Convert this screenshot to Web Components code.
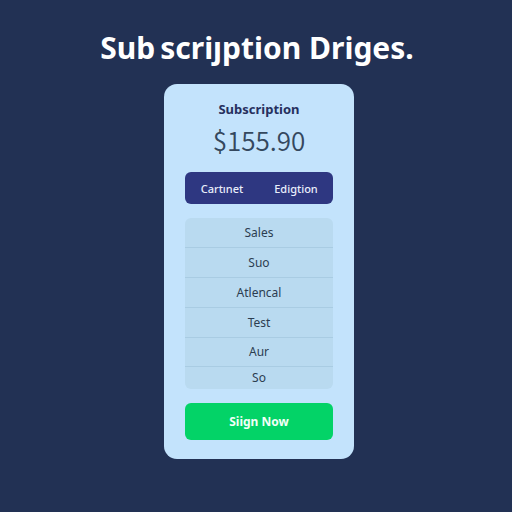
<!DOCTYPE html>
<html lang="en">
<head>
<meta charset="utf-8">
<title>Subscription</title>
<style>
html { height: 100%; }
body { margin: 0; min-height: 100%; background: #223154; font-family: "Noto Sans", "Open Sans", sans-serif; }
</style>
</head>
<body>
<subscription-page>
  <span slot="title">Sub&#8201;scriȷption Driges.</span>
  <price-card>
    <span slot="name">Subscription</span>
    <span slot="price">$155.90</span>
    <plan-toggle>
      <toggle-option>Cartınet</toggle-option>
      <toggle-option>Edigtion</toggle-option>
    </plan-toggle>
    <feature-list>
      <feature-row>Sales</feature-row>
      <feature-row>Suo</feature-row>
      <feature-row>Atlencal</feature-row>
      <feature-row>Test</feature-row>
      <feature-row compact>Aur</feature-row>
      <feature-row last>So</feature-row>
    </feature-list>
    <action-button>Siign Now</action-button>
  </price-card>
</subscription-page>
<script>
function define(name, markup) {
  const template = document.createElement("template");
  template.innerHTML = markup;
  customElements.define(name, class extends HTMLElement {
    constructor() {
      super();
      this.attachShadow({ mode: "open" }).append(template.content.cloneNode(true));
    }
  });
}

define("subscription-page", `
<style>
:host { display: flex; flex-direction: column; align-items: center; gap: 12px; padding: 24px 14px 48px 16px; }
h1 { margin: 0; color: #fff; font-size: 30px; line-height: 48px; font-weight: 700; text-align: center; }
main { width: 38%; min-width: 190px; padding-left: 4px; }
</style>
<h1><slot name="title"></slot></h1>
<main><slot></slot></main>`);

define("price-card", `
<style>
:host { display: flex; flex-direction: column; gap: 14px; box-sizing: border-box; padding: 16px 21px 19px; border-radius: 13px; background: #c3e3fc; }
header { text-align: center; }
h2 { margin: 0; color: #26305e; font-size: 13px; line-height: 18px; font-weight: 700; }
p { margin: 0; padding-top: 4px; color: #34485e; font: 350 26px/36px "Noto Sans CJK SC", "Open Sans", sans-serif; }
</style>
<header><h2><slot name="name"></slot></h2><p><slot name="price"></slot></p></header>
<slot></slot>`);

define("plan-toggle", `
<style>
:host { display: grid; grid-template-columns: 1fr 1fr; border-radius: 6px; background: #2e3781; overflow: hidden; }
</style>
<slot></slot>`);

define("toggle-option", `
<style>
:host { display: flex; }
button { flex: 1; border: 0; padding: 1px 0 0; background: none; color: #e9eefb; font: 500 11px/31px "Noto Sans", sans-serif; cursor: pointer; }
</style>
<button type="button"><slot></slot></button>`);

define("feature-list", `
<style>
:host { display: block; border-radius: 6px; background: #b9daf0; overflow: hidden; }
div { display: flex; flex-direction: column; }
</style>
<div role="list"><slot></slot></div>`);

define("feature-row", `
<style>
:host { display: block; border-bottom: 1px solid #a9cce3; color: #2c3d50; font-size: 12px; line-height: 29px; text-align: center; }
:host([compact]) { line-height: 28px; }
:host([last]) { border-bottom: 0; line-height: 22px; }
</style>
<div role="listitem"><slot></slot></div>`);

define("action-button", `
<style>
:host { display: flex; }
button { flex: 1; border: 0; border-radius: 6px; padding: 0; background: #03d367; color: #f2fff7; font: 700 12px/37px "Noto Sans", sans-serif; cursor: pointer; }
</style>
<button type="button"><slot></slot></button>`);
</script>
</body>
</html>
